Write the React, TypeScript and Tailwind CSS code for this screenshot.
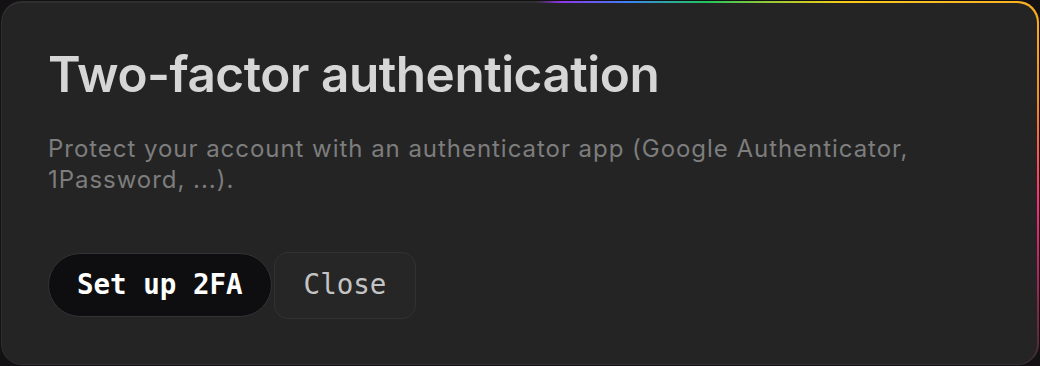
export default function App() {
  return (
    <div className="h-[366px] w-[1040px] bg-[#131113] p-px">
      <div className="h-full w-full rounded-[21px] bg-[#2f2f2f] [background-image:conic-gradient(from_0deg_at_50%_50%,transparent_0deg,transparent_5deg,#9333ea_13deg,#3b82f6_31deg,#22c55e_46deg,#facc15_61deg,#fbbf24_66deg,#f7931e_80deg,#ff2d78_92deg,#b0285a_100deg,#5a2a3c_107deg,transparent_110deg)] pt-[2px] pr-[2px] pb-px pl-px">
        <div className="flex h-full flex-col rounded-[20px] bg-[#242424] px-[46px] pt-[47px]">
          <h2 className="font-['Inter',sans-serif] text-[49.5px] leading-none font-semibold tracking-[-0.01em] text-[#d6d6d6]">
            Two-factor authentication
          </h2>
          <p className="mt-[33px] font-['Inter',sans-serif] text-[24px] leading-[31px] tracking-[0.04em] text-[#7d7d7d]">
            Protect your account with an authenticator app (Google Authenticator, 1Password, ...).
          </p>
          <div className="mt-[57px] flex items-center gap-[2px]">
            <button className="h-[64px] rounded-full border border-[#333335] bg-[#0e0e10] px-[28px] font-['DejaVu_Sans_Mono',monospace] text-[27.5px] font-bold text-white">
              Set up 2FA
            </button>
            <button className="h-[67px] rounded-[14px] border border-[#323232] bg-[#262626] px-[29px] font-['DejaVu_Sans_Mono',monospace] text-[27.5px] text-[#c4c4c4]">
              Close
            </button>
          </div>
        </div>
      </div>
    </div>
  );
}
